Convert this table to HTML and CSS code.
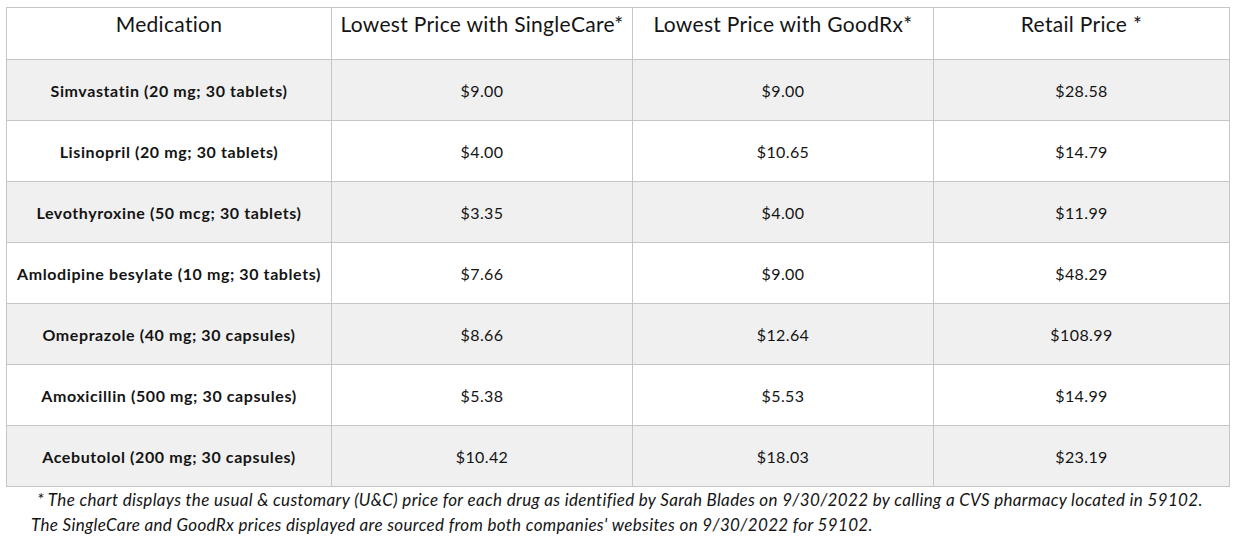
FILE: index.html
```html
<!DOCTYPE html>
<html>
<head>
<meta charset="utf-8">
<link rel="stylesheet" href="styles.css">
</head>
<body>
<div class="page">
  <table class="prices">
    <thead>
      <tr>
        <th class="c1">Medication</th>
        <th class="c2">Lowest Price with SingleCare*</th>
        <th class="c3">Lowest Price with GoodRx*</th>
        <th class="c4">Retail Price *</th>
      </tr>
    </thead>
    <tbody>
      <tr class="shade"><td class="med">Simvastatin (20 mg; 30 tablets)</td><td>$9.00</td><td>$9.00</td><td>$28.58</td></tr>
      <tr><td class="med">Lisinopril (20 mg; 30 tablets)</td><td>$4.00</td><td>$10.65</td><td>$14.79</td></tr>
      <tr class="shade"><td class="med">Levothyroxine (50 mcg; 30 tablets)</td><td>$3.35</td><td>$4.00</td><td>$11.99</td></tr>
      <tr><td class="med">Amlodipine besylate (10 mg; 30 tablets)</td><td>$7.66</td><td>$9.00</td><td>$48.29</td></tr>
      <tr class="shade"><td class="med">Omeprazole (40 mg; 30 capsules)</td><td>$8.66</td><td>$12.64</td><td>$108.99</td></tr>
      <tr><td class="med">Amoxicillin (500 mg; 30 capsules)</td><td>$5.38</td><td>$5.53</td><td>$14.99</td></tr>
      <tr class="shade"><td class="med">Acebutolol (200 mg; 30 capsules)</td><td>$10.42</td><td>$18.03</td><td>$23.19</td></tr>
    </tbody>
  </table>
  <div class="note">
    <p class="l1">* The chart displays the usual &amp; customary (U&amp;C) price for each drug as identified by Sarah Blades on 9/30/2022 by calling a CVS pharmacy located in 59102.</p>
    <p class="l2">The SingleCare and GoodRx prices displayed are sourced from both companies' websites on 9/30/2022 for 59102.</p>
  </div>
</div>
</body>
</html>
```

FILE: styles.css
```css
html, body {
  margin: 0;
  padding: 0;
  background: #ffffff;
}
body {
  font-family: Lato, "Open Sans", sans-serif;
  color: #141414;
}
.page {
  padding: 7px 0 0 6px;
  width: 1223px;
}
.prices {
  border-collapse: collapse;
  table-layout: fixed;
  width: 1223px;
}
.prices th, .prices td {
  border: 1px solid #c6c6c6;
  text-align: center;
  padding: 0;
}
.prices th {
  height: 52px;
  vertical-align: top;
  font-weight: 400;
  font-size: 21px;
  letter-spacing: 0.3px;
  padding-top: 3px;
  box-sizing: border-box;
}
.c1 { width: 325px; }
.c2 { width: 301px; }
.c3 { width: 301px; }
.c4 { width: 296px; }
.prices td {
  height: 60px;
  font-size: 16px;
  letter-spacing: 0.4px;
  vertical-align: middle;
}
.prices td.med {
  font-weight: 700;
  letter-spacing: 0.6px;
}
.shade td {
  background: #f0f0f0;
}
.note {
  font-style: italic;
  font-size: 17px;
  letter-spacing: 0.33px;
}
.note p {
  margin: 0;
  line-height: 25px;
}
.l1 { padding-left: 31px; }
.l2 { padding-left: 25px; }
```
